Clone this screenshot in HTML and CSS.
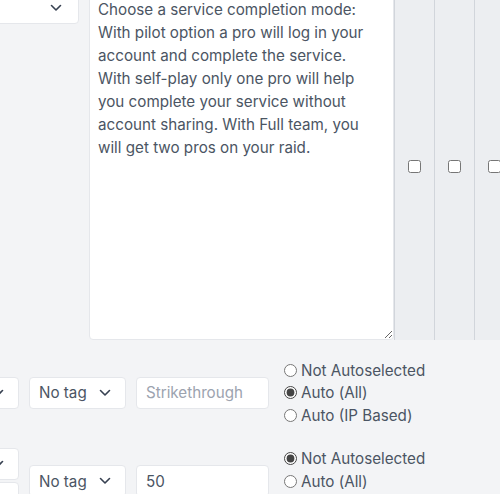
FILE: index.html
```html
<!DOCTYPE html>
<html lang="en">
  <head>
    <title>Service options</title>
    <meta charset="utf-8">
    <link rel="stylesheet" href="styles.css">
  </head>
  <body>
    <div class="scroller">
      <div class="topRow">
        <div class="select wide">
          <span></span>
          <svg class="chev" width="12" height="8" viewBox="0 0 12 8"><path d="M1.5 1.5 6 6l4.5-4.5" fill="none" stroke="#374151" stroke-width="1.6" stroke-linecap="round" stroke-linejoin="round"/></svg>
        </div>
        <textarea class="desc">Choose a service completion mode:
With pilot option a pro will log in your
account and complete the service.
With self-play only one pro will help
you complete your service without
account sharing. With Full team, you
will get two pros on your raid.</textarea>
        <div class="checkCell"><input type="checkbox"></div>
        <div class="checkCell"><input type="checkbox"></div>
        <div class="checkCell"><input type="checkbox"></div>
      </div>

      <div class="rows">
        <div class="row">
          <div class="selCol">
            <div class="select">
              <span></span>
              <svg class="chev" width="12" height="8" viewBox="0 0 12 8"><path d="M1.5 1.5 6 6l4.5-4.5" fill="none" stroke="#374151" stroke-width="1.6" stroke-linecap="round" stroke-linejoin="round"/></svg>
            </div>
          </div>
          <div class="select tag">
            <span>No tag</span>
            <svg class="chev" width="12" height="8" viewBox="0 0 12 8"><path d="M1.5 1.5 6 6l4.5-4.5" fill="none" stroke="#374151" stroke-width="1.6" stroke-linecap="round" stroke-linejoin="round"/></svg>
          </div>
          <input class="text" type="text" placeholder="Strikethrough">
          <div class="radios">
            <label><input type="radio" name="auto1">Not Autoselected</label>
            <label><input type="radio" name="auto1" checked>Auto (All)</label>
            <label><input type="radio" name="auto1">Auto (IP Based)</label>
          </div>
        </div>

        <div class="row">
          <div class="selCol">
            <div class="select">
              <span></span>
              <svg class="chev" width="12" height="8" viewBox="0 0 12 8"><path d="M1.5 1.5 6 6l4.5-4.5" fill="none" stroke="#374151" stroke-width="1.6" stroke-linecap="round" stroke-linejoin="round"/></svg>
            </div>
            <div class="select">
              <span></span>
              <svg class="chev" width="12" height="8" viewBox="0 0 12 8"><path d="M1.5 1.5 6 6l4.5-4.5" fill="none" stroke="#374151" stroke-width="1.6" stroke-linecap="round" stroke-linejoin="round"/></svg>
            </div>
          </div>
          <div class="select tag">
            <span>No tag</span>
            <svg class="chev" width="12" height="8" viewBox="0 0 12 8"><path d="M1.5 1.5 6 6l4.5-4.5" fill="none" stroke="#374151" stroke-width="1.6" stroke-linecap="round" stroke-linejoin="round"/></svg>
          </div>
          <input class="text" type="text" value="50">
          <div class="radios">
            <label><input type="radio" name="auto2" checked>Not Autoselected</label>
            <label><input type="radio" name="auto2">Auto (All)</label>
            <label><input type="radio" name="auto2">Auto (IP Based)</label>
          </div>
        </div>
      </div>
    </div>
  </body>
</html>
```
FILE: styles.css
```css
html, body{
  margin: 0;
  height: 100%;
  overflow: hidden;
}
body{
  background-color: #f3f4f6;
  font-family: Inter, "Noto Sans", sans-serif;
  font-size: 15.2px;
  color: #4b5563;
}
.scroller{
  margin-left: -20px;
  margin-top: -12px;
  width: 560px;
}
.topRow{
  display: flex;
  gap: 10px;
  height: 352px;
}
.select{
  box-sizing: border-box;
  height: 32px;
  background-color: white;
  border: 1px solid #e5e7eb;
  border-radius: 4px;
  display: flex;
  align-items: center;
  justify-content: space-between;
  padding: 0 16px 0 9px;
}
.select.wide{
  width: 99px;
  margin-top: 4px;
}
.chev{
  display: block;
}
.desc{
  box-sizing: border-box;
  width: 305px;
  height: 352px;
  margin: 0;
  padding: 9px 8px;
  border: 1px solid #e5e7eb;
  border-radius: 4px;
  background-color: white;
  font-family: inherit;
  font-size: 15.2px;
  line-height: 23px;
  color: #4b5563;
  resize: vertical;
  white-space: pre-wrap;
  overflow: hidden;
}
.checkCell{
  box-sizing: border-box;
  width: 40px;
  flex: none;
  margin-left: -10px;
  border-left: 1px solid #d1d5db;
  background-color: #eceef1;
  display: flex;
  justify-content: center;
  align-items: center;
  padding-top: 5px;
}
.checkCell input{
  margin: 0;
}
.rows{
  padding-top: 19px;
  display: flex;
  flex-direction: column;
  gap: 21px;
}
.row{
  display: flex;
  align-items: center;
  gap: 10px;
}
.selCol{
  width: 39px;
  display: flex;
  flex-direction: column;
  gap: 2px;
}
.selCol .select{
  padding-right: 14px;
}
.select.tag{
  width: 97px;
  padding-right: 14px;
}
.text{
  box-sizing: border-box;
  width: 133px;
  height: 32px;
  margin: 0;
  padding: 0 9px;
  border: 1px solid #e5e7eb;
  border-radius: 4px;
  background-color: white;
  font-family: inherit;
  font-size: 15.2px;
  color: #4b5563;
}
.text::placeholder{
  color: #9ca3af;
}
.radios{
  display: flex;
  flex-direction: column;
}
.radios label{
  display: flex;
  align-items: center;
  height: 22.5px;
  white-space: nowrap;
}
.radios input{
  margin: 0 4px 0 5px;
  accent-color: #444;
}
```
